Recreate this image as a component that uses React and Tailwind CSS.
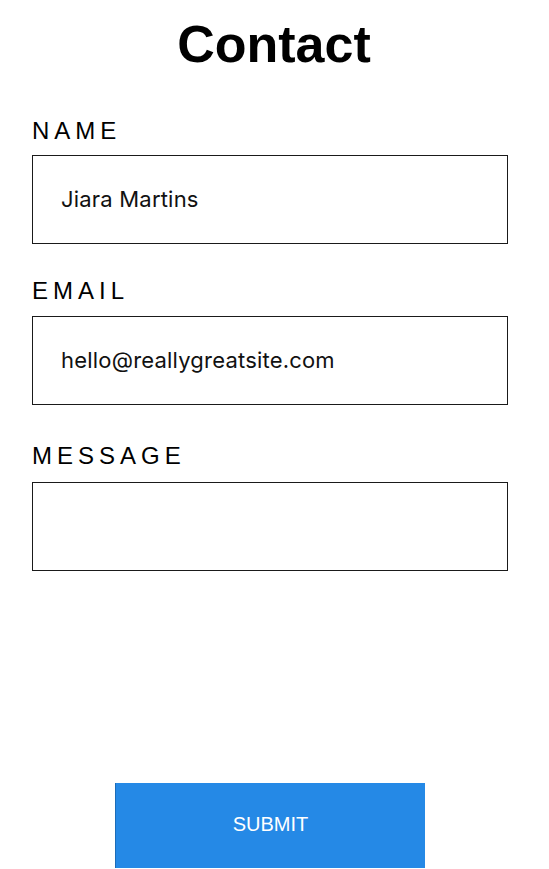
import React from 'react'

const labelCls = "block text-[24px] leading-[24px] tracking-[5px] text-black font-['Liberation_Sans',Arial,sans-serif]"
const boxCls = "block w-[476px] h-[89px] border border-[#1a1a1a] bg-white pl-[28px] pb-[2px] text-[22px] tracking-[0.2px] text-[#111] font-['Inter','Liberation_Sans',sans-serif] outline-none"

function Field({ label, value, top, gap }) {
  return (
    <div className={top}>
      <label className={labelCls}>{label}</label>
      <input readOnly defaultValue={value} className={`${boxCls} ${gap}`} />
    </div>
  )
}

export default function App() {
  return (
    <main className="w-[549px] min-h-[869px] bg-white pl-[32px]">
      <h1 className="w-[476px] pt-[18px] pl-[8px] text-center text-[52px] leading-[52px] font-bold text-black font-['Liberation_Sans',Arial,sans-serif]">
        Contact
      </h1>

      <Field label="NAME" value="Jiara Martins" top="mt-[49px]" gap="mt-[12px]" />
      <Field label="EMAIL" value="hello@reallygreatsite.com" top="mt-[35px]" gap="mt-[13px]" />
      <Field label="MESSAGE" value="" top="mt-[39px]" gap="mt-[14px]" />

      <div className="w-[476px] flex justify-center mt-[212px]">
        <button className="w-[310px] h-[85px] pb-[4px] bg-[#2589e6] border-l border-[#1c6cb8] text-white text-[20px] font-['Liberation_Sans',Arial,sans-serif]">
          SUBMIT
        </button>
      </div>
    </main>
  )
}
